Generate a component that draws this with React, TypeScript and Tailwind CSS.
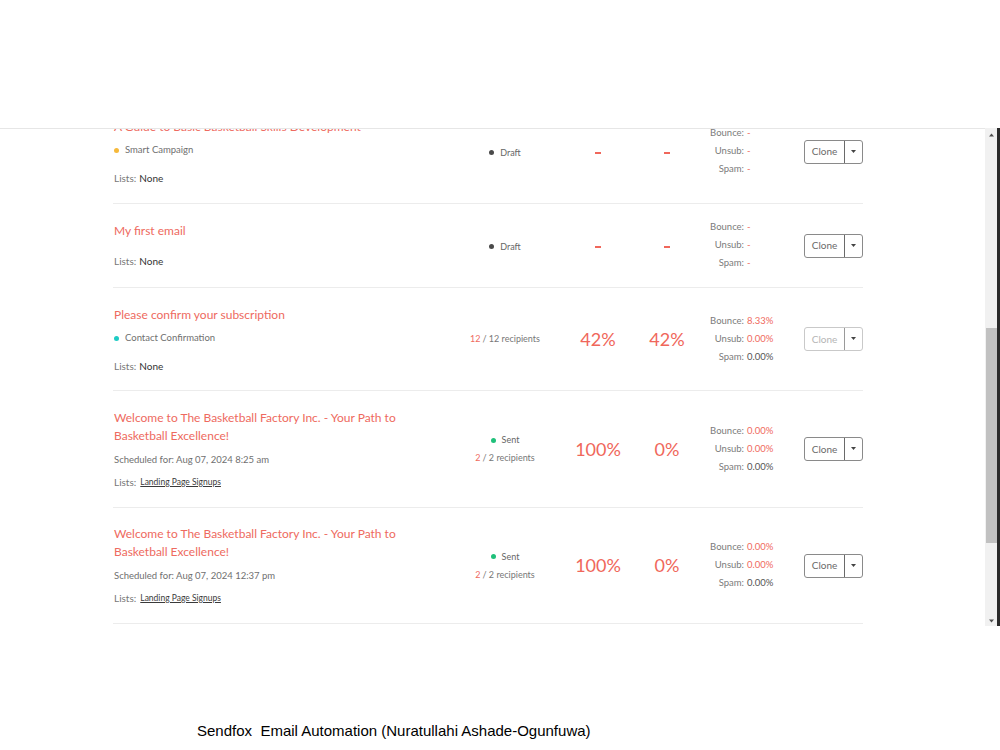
import React from "react";

type Row = {
  title: string[];
  meta?: { dot?: string; text: string; kind: "dot" | "sched" };
  lists: "none" | "link";
  listsMt: string;
  status: "draft" | "recip" | "sent";
  recip?: [string, string];
  open: string;
  click: string;
  bounce: string;
  unsub: string;
  spam: string;
  spamDark: boolean;
  cloneLight?: boolean;
  pt: string;
  pb: string;
};

const rows: Row[] = [
  {
    title: ["A Guide to Basic Basketball Skills Development"],
    meta: { dot: "bg-[#f6b93b]", text: "Smart Campaign", kind: "dot" },
    lists: "none",
    listsMt: "mt-[13px]",
    status: "draft",
    open: "-",
    click: "-",
    bounce: "-",
    unsub: "-",
    spam: "-",
    spamDark: false,
    pt: "pt-[18px]",
    pb: "pb-[17px]",
  },
  {
    title: ["My first email"],
    lists: "none",
    listsMt: "mt-[13px]",
    status: "draft",
    open: "-",
    click: "-",
    bounce: "-",
    unsub: "-",
    spam: "-",
    spamDark: false,
    pt: "pt-[18px]",
    pb: "pb-[18px]",
  },
  {
    title: ["Please confirm your subscription"],
    meta: { dot: "bg-[#1ecbc4]", text: "Contact Confirmation", kind: "dot" },
    lists: "none",
    listsMt: "mt-[13px]",
    status: "recip",
    recip: ["12", "12"],
    open: "42%",
    click: "42%",
    bounce: "8.33%",
    unsub: "0.00%",
    spam: "0.00%",
    spamDark: true,
    cloneLight: true,
    pt: "pt-[18px]",
    pb: "pb-[16px]",
  },
  {
    title: ["Welcome to The Basketball Factory Inc. - Your Path to", "Basketball Excellence!"],
    meta: { text: "Scheduled for: Aug 07, 2024 8:25 am", kind: "sched" },
    lists: "link",
    listsMt: "mt-[7px]",
    status: "sent",
    recip: ["2", "2"],
    open: "100%",
    click: "0%",
    bounce: "0.00%",
    unsub: "0.00%",
    spam: "0.00%",
    spamDark: true,
    pt: "pt-[18px]",
    pb: "pb-[17px]",
  },
  {
    title: ["Welcome to The Basketball Factory Inc. - Your Path to", "Basketball Excellence!"],
    meta: { text: "Scheduled for: Aug 07, 2024 12:37 pm", kind: "sched" },
    lists: "link",
    listsMt: "mt-[7px]",
    status: "sent",
    recip: ["2", "2"],
    open: "100%",
    click: "0%",
    bounce: "0.00%",
    unsub: "0.00%",
    spam: "0.00%",
    spamDark: true,
    pt: "pt-[17px]",
    pb: "pb-[17px]",
  },
];

function StatLine({ label, value, dark }: { label: string; value: string; dark?: boolean }) {
  return (
    <div className="flex h-[18px] items-center">
      <span className="w-[41px] text-right text-[#7b7b7b]">{label}</span>
      <span className={"ml-[3px] " + (dark ? "text-[#555]" : "text-[#f06a5e]")}>{value}</span>
    </div>
  );
}

function Pct({ v }: { v: string }) {
  if (v === "-") {
    return <span className="mt-[2px] inline-block h-[2px] w-[6px] bg-[#f0675b]"></span>;
  }
  return <span className="text-[18px]">{v}</span>;
}

function CampaignRow({ r }: { r: Row }) {
  return (
    <div className="flex border-b border-[#ececec]">
      <div className={"w-[332px] pl-[1px] " + r.pt + " " + r.pb}>
        {r.title.map((t, i) => (
          <div key={i} className="h-[18px] text-[12px] leading-[18px] text-[#ee6a60] whitespace-nowrap">
            {t}
          </div>
        ))}
        {r.meta && (
          <div
            className={
              "flex h-[14px] items-center text-[9.5px] text-[#6f6f6f] " +
              (r.meta.kind === "dot" ? "mt-[7px]" : "mt-[8px]")
            }
          >
            {r.meta.dot && <span className={"mr-[6px] inline-block h-[5px] w-[5px] rounded-full " + r.meta.dot}></span>}
            {r.meta.text}
          </div>
        )}
        <div className={"flex h-[16px] items-center text-[10px] " + r.listsMt}>
          <span className="text-[#777]">Lists:</span>
          {r.lists === "none" ? (
            <span className="ml-[3px] text-[#333]">None</span>
          ) : (
            <span className="ml-[4px] text-[8.5px] text-[#3a3a3a] underline">Landing Page Signups</span>
          )}
        </div>
      </div>
      <div className="flex w-[120px] flex-col items-center justify-center text-[9px]">
        {r.status === "draft" && (
          <div className="mt-[2px] flex items-center text-[#666]">
            <span className="mr-[6px] inline-block h-[5px] w-[5px] rounded-full bg-[#4a4a4a]"></span>
            Draft
          </div>
        )}
        {r.status === "sent" && (
          <div className="flex h-[18px] items-center text-[#666]">
            <span className="mr-[6px] inline-block h-[5px] w-[5px] rounded-full bg-[#1fc07a]"></span>
            Sent
          </div>
        )}
        {r.recip && (
          <div className="flex h-[18px] items-center text-[#777]">
            <span className="text-[#f06a5e]">{r.recip[0]}</span>
            <span className="ml-[2px]">/ {r.recip[1]} recipients</span>
          </div>
        )}
      </div>
      <div className="flex w-[66px] items-center justify-center text-[#f0675b]">
        <Pct v={r.open} />
      </div>
      <div className="flex w-[72px] items-center justify-center text-[#f0675b]">
        <Pct v={r.click} />
      </div>
      <div className="flex w-[101px] flex-col justify-center text-[9.5px]">
        <StatLine label="Bounce:" value={r.bounce} />
        <StatLine label="Unsub:" value={r.unsub} />
        <StatLine label="Spam:" value={r.spam} dark={r.spamDark} />
      </div>
      <div className="flex w-[59px] items-center">
        <div
          className={
            "flex h-[24px] w-[59px] rounded-[3px] border " +
            (r.cloneLight ? "border-[#c9c9c9]" : "border-[#8a8a8a]")
          }
        >
          <div
            className={
              "flex w-[39px] items-center justify-center text-[10px] " +
              (r.cloneLight ? "text-[#b5b5b5]" : "text-[#6a6a6a]")
            }
          >
            Clone
          </div>
          <div className={"flex flex-1 items-center justify-center border-l " + (r.cloneLight ? "border-[#9a9a9a]" : "border-[#6a6a6a]")}>
            <svg width="5" height="4" viewBox="0 0 5 4">
              <path d="M0 0 L5 0 L2.5 3 Z" fill="#444" />
            </svg>
          </div>
        </div>
      </div>
    </div>
  );
}

export default function App() {
  return (
    <div className="h-[750px] w-[1000px] overflow-hidden bg-white" style={{ fontFamily: "Lato, 'Open Sans', sans-serif" }}>
      <div className="h-[128px]"></div>
      <div className="flex h-[498px]">
        <div className="flex-1 overflow-hidden border-t border-[#e6e6e6]">
          <div className="ml-[113px] mt-[-29px] w-[750px]">
            {rows.map((r, i) => (
              <CampaignRow key={i} r={r} />
            ))}
          </div>
        </div>
        <div className="flex w-[12px] flex-col bg-[#f1f1f1]">
          <div className="flex h-[14px] items-center justify-center">
            <svg width="5" height="4" viewBox="0 0 5 4">
              <path d="M0 3.5 L5 3.5 L2.5 0.5 Z" fill="#505050" />
            </svg>
          </div>
          <div className="h-[186px]"></div>
          <div className="ml-[1px] h-[215px] bg-[#c1c1c1]"></div>
          <div className="flex-1"></div>
          <div className="flex h-[10px] items-center justify-center">
            <svg width="5" height="4" viewBox="0 0 5 4">
              <path d="M0 0.5 L5 0.5 L2.5 3.5 Z" fill="#505050" />
            </svg>
          </div>
        </div>
        <div className="w-[3px] bg-[#2a2a2a]"></div>
      </div>
      <div
        className="ml-[197px] mt-[96px] text-[15px] leading-[17px] text-black"
        style={{ fontFamily: "'Liberation Sans', Arial, sans-serif" }}
      >
        Sendfox&nbsp; Email Automation (Nuratullahi Ashade-Ogunfuwa)
      </div>
    </div>
  );
}
